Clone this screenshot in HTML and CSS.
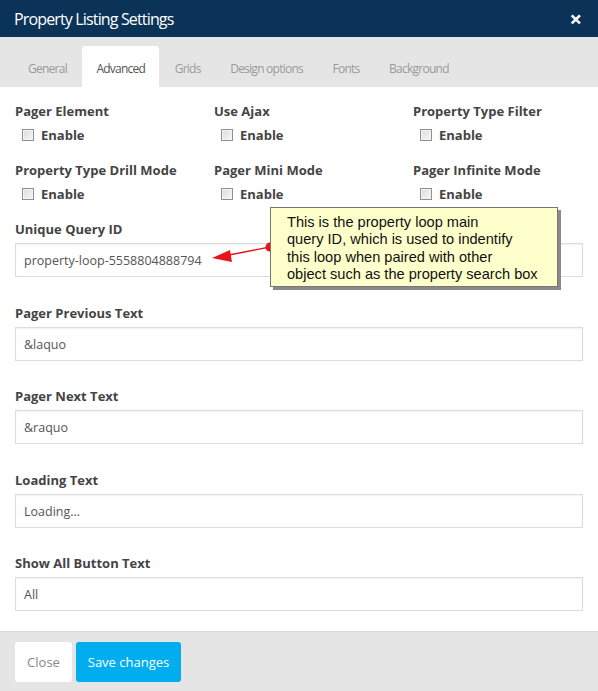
FILE: index.html
```html
<!DOCTYPE html>
<html>
<head>
<meta charset="utf-8">
<link rel="stylesheet" href="styles.css">
</head>
<body>
<div class="modal">
  <div class="header">
    <div class="title">Property Listing Settings</div>
    <div class="close-x">×</div>
  </div>
  <div class="tabs">
    <div class="tab">General</div>
    <div class="tab active">Advanced</div>
    <div class="tab">Grids</div>
    <div class="tab">Design options</div>
    <div class="tab">Fonts</div>
    <div class="tab">Background</div>
  </div>
  <div class="body">
    <div class="checks">
      <div class="check-group">
        <div class="label">Pager Element</div>
        <div class="check"><span class="box"></span><span>Enable</span></div>
      </div>
      <div class="check-group">
        <div class="label">Use Ajax</div>
        <div class="check"><span class="box"></span><span>Enable</span></div>
      </div>
      <div class="check-group">
        <div class="label">Property Type Filter</div>
        <div class="check"><span class="box"></span><span>Enable</span></div>
      </div>
      <div class="check-group">
        <div class="label">Property Type Drill Mode</div>
        <div class="check"><span class="box"></span><span>Enable</span></div>
      </div>
      <div class="check-group">
        <div class="label">Pager Mini Mode</div>
        <div class="check"><span class="box"></span><span>Enable</span></div>
      </div>
      <div class="check-group">
        <div class="label">Pager Infinite Mode</div>
        <div class="check"><span class="box"></span><span>Enable</span></div>
      </div>
    </div>
    <div class="field">
      <div class="label">Unique Query ID</div>
      <div class="input">property-loop-5558804888794</div>
    </div>
    <div class="field">
      <div class="label">Pager Previous Text</div>
      <div class="input">&amp;laquo</div>
    </div>
    <div class="field">
      <div class="label">Pager Next Text</div>
      <div class="input">&amp;raquo</div>
    </div>
    <div class="field">
      <div class="label">Loading Text</div>
      <div class="input">Loading...</div>
    </div>
    <div class="field">
      <div class="label">Show All Button Text</div>
      <div class="input">All</div>
    </div>
  </div>
  <div class="footer">
    <div class="btn btn-close">Close</div>
    <div class="btn btn-save">Save changes</div>
  </div>

  <svg class="pointer" width="72" height="28" viewBox="0 0 72 28">
    <line x1="65" y1="7" x2="24" y2="15" stroke="#e8141b" stroke-width="1.3"/>
    <polygon points="7,18 25,10 27,22" fill="#e8141b"/>
    <circle cx="65" cy="7" r="4.5" fill="#e8141b"/>
  </svg>
  <div class="note">This is the property loop main<br>query ID, which is used to indentify<br>this loop when paired with other<br>object such as the property search box</div>
</div>
</body>
</html>
```

FILE: styles.css
```css
* { box-sizing: border-box; }
html, body { margin: 0; padding: 0; }
body {
  width: 598px;
  height: 691px;
  overflow: hidden;
  font-family: "Open Sans", "Liberation Sans", sans-serif;
  background: #fff;
}
.modal {
  position: relative;
  width: 598px;
  height: 691px;
  display: flex;
  flex-direction: column;
}
.header {
  height: 37px;
  flex-shrink: 0;
  background: #0b3358;
  color: #fff;
  display: flex;
  align-items: center;
  justify-content: space-between;
  padding: 0 16px 0 14px;
}
.title {
  font-size: 16px;
  letter-spacing: -0.85px;
}
.close-x {
  font-size: 22px;
  font-weight: bold;
  line-height: 1;
  margin-top: -1px;
}
.tabs {
  height: 50px;
  flex-shrink: 0;
  background: #e5e5e5;
  display: flex;
  align-items: flex-end;
  padding-left: 14px;
}
.tab {
  height: 41px;
  padding: 14px 14px 0;
  font-size: 12px;
  letter-spacing: -0.75px;
  color: #9a9a9a;
  margin-right: 1.5px;
  border-radius: 4px 4px 0 0;
}
.tab.active {
  background: #fff;
  color: #555;
}
.body {
  flex: 1;
  min-height: 0;
  overflow: hidden;
  padding: 15px 15px 0;
}
.checks {
  display: grid;
  grid-template-columns: 199px 199px 1fr;
  row-gap: 17px;
  margin-bottom: 17px;
}
.label {
  font-size: 13px;
  font-weight: bold;
  color: #444;
  line-height: 18px;
}
.check {
  display: flex;
  align-items: center;
  gap: 7px;
  margin-top: 6px;
  padding-left: 7px;
  font-size: 13px;
  font-weight: bold;
  color: #444;
  line-height: 18px;
}
.box {
  width: 12px;
  height: 12px;
  border: 1px solid #8e8f8f;
  background: linear-gradient(135deg, #dcdcdc, #f6f6f6);
  box-shadow: inset 0 0 0 1px #f4f4f4;
}
.field {
  margin-bottom: 26.5px;
}
.field:last-child {
  margin-bottom: 0;
}
.field .label {
  margin-bottom: 5px;
}
.input {
  height: 34px;
  border: 1px solid #dcdcdc;
  box-shadow: inset 0 1px 2px rgba(0,0,0,0.06);
  padding: 0 8px;
  font-size: 12.5px;
  line-height: 33px;
  color: #555;
}
.footer {
  height: 60px;
  flex-shrink: 0;
  background: #e5e5e5;
  border-top: 1px solid #dadada;
  display: flex;
  align-items: flex-start;
  gap: 4px;
  padding: 10px 15px 0;
}
.btn {
  height: 40px;
  line-height: 40px;
  font-size: 13px;
  border-radius: 3px;
  text-align: center;
}
.btn-close {
  width: 57px;
  background: #fff;
  color: #888;
}
.btn-save {
  width: 105px;
  background: #00aeef;
  color: #fff;
}
.note {
  position: absolute;
  left: 270px;
  top: 207px;
  width: 288px;
  height: 80px;
  background: #ffffcc;
  border: 1px solid #767676;
  box-shadow: 3px 3px 0 #8a8a8a;
  padding: 6px 0 0 16px;
  font-family: "Liberation Sans", Arial, sans-serif;
  font-size: 14.6px;
  line-height: 17.3px;
  color: #111;
}
.pointer {
  position: absolute;
  left: 205px;
  top: 240px;
}
```
